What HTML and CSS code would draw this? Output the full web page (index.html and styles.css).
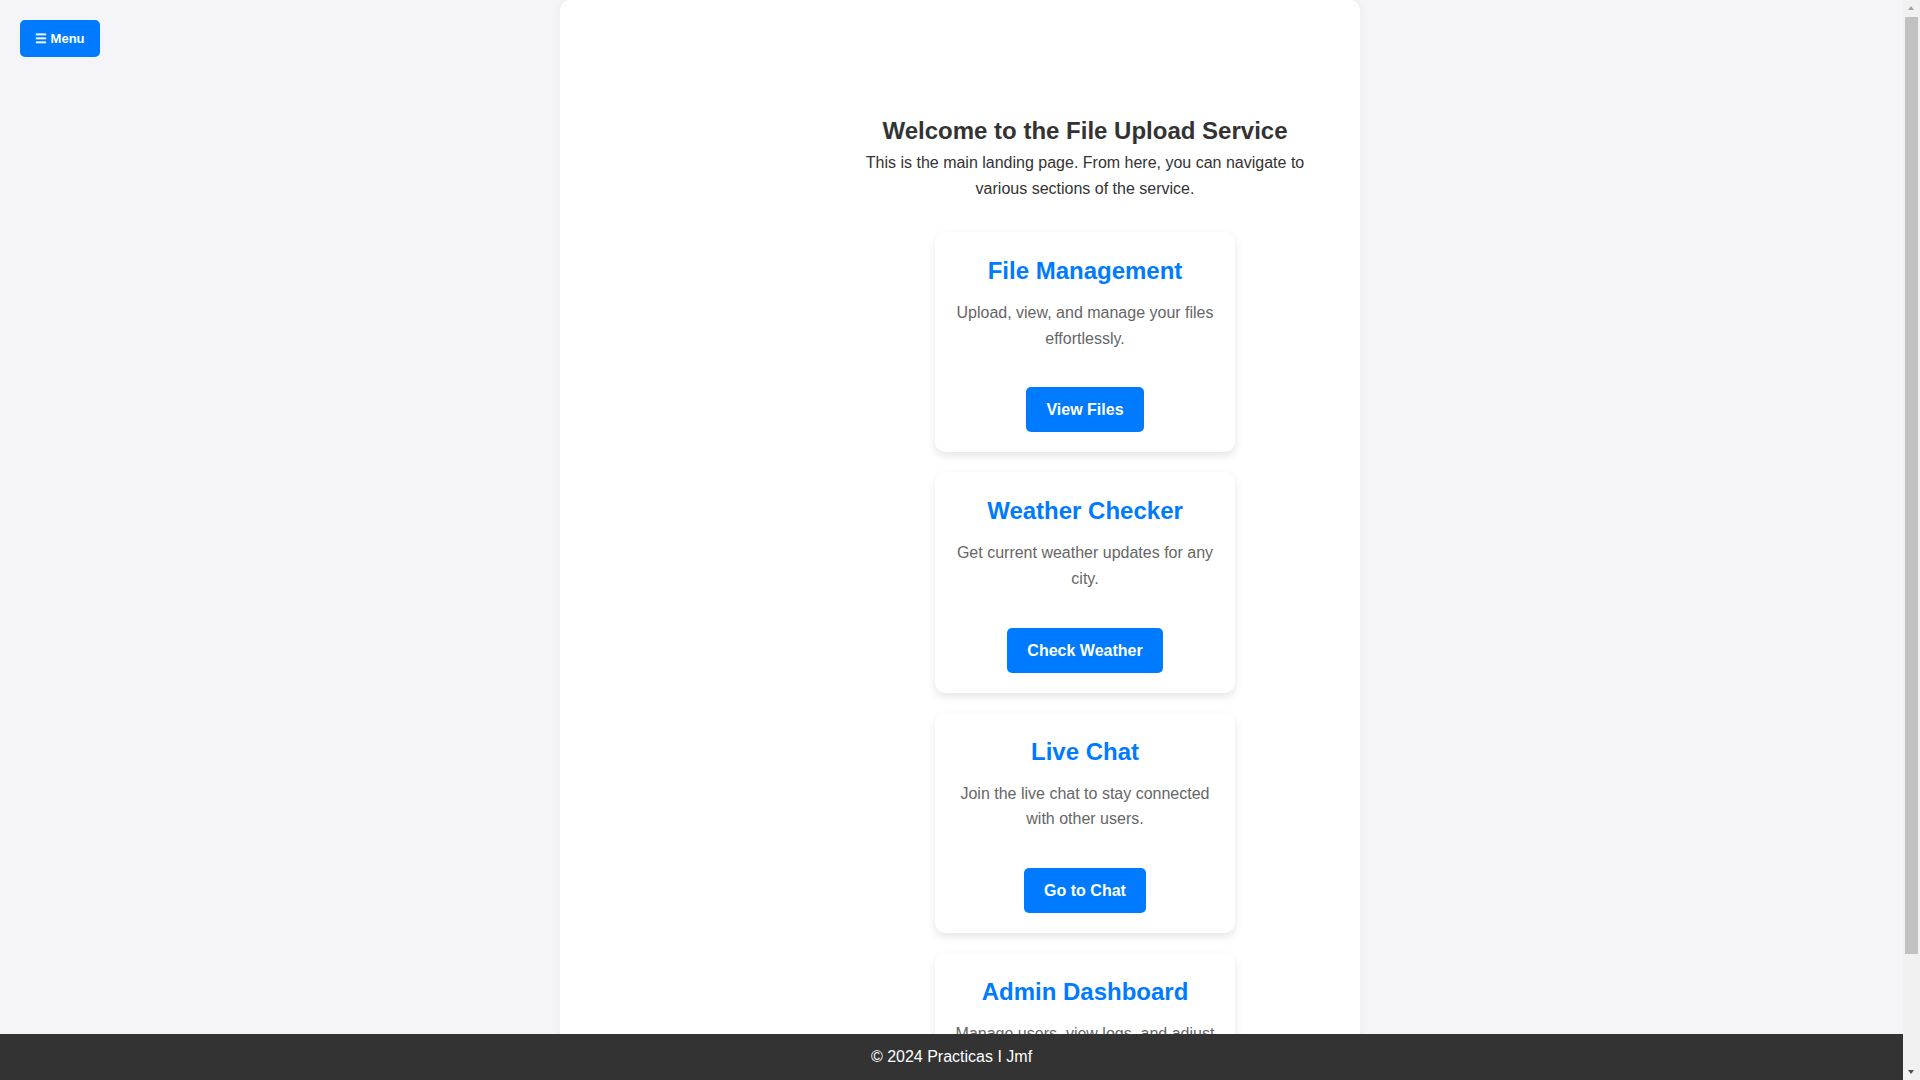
FILE: index.html
```html
<!DOCTYPE html>
<html lang="en">
<head>
<meta charset="UTF-8">
<title>File Upload Service</title>
<link rel="stylesheet" href="styles.css">
</head>
<body>
<button class="menu-btn">☰ Menu</button>
<div class="container">
  <main class="content">
    <h2 class="title">Welcome to the File Upload Service</h2>
    <p class="intro">This is the main landing page. From here, you can navigate to various sections of the service.</p>
    <div class="cards">
      <section class="card">
        <h3 class="card-title">File Management</h3>
        <p class="card-text">Upload, view, and manage your files effortlessly.</p>
        <a class="card-btn" href="#">View Files</a>
      </section>
      <section class="card">
        <h3 class="card-title">Weather Checker</h3>
        <p class="card-text">Get current weather updates for any city.</p>
        <a class="card-btn" href="#">Check Weather</a>
      </section>
      <section class="card">
        <h3 class="card-title">Live Chat</h3>
        <p class="card-text">Join the live chat to stay connected with other users.</p>
        <a class="card-btn" href="#">Go to Chat</a>
      </section>
      <section class="card">
        <h3 class="card-title">Admin Dashboard</h3>
        <p class="card-text">Manage users, view logs, and adjust settings.</p>
        <a class="card-btn" href="#">Go to Dashboard</a>
      </section>
    </div>
  </main>
</div>
<footer class="footer">© 2024 Practicas I Jmf</footer>
<div class="scrollbar" aria-hidden="true">
  <span class="sb-arrow sb-up"></span>
  <span class="sb-thumb"></span>
  <span class="sb-arrow sb-down"></span>
</div>
</body>
</html>
```
FILE: styles.css
```css
html, body {
  margin: 0;
  padding: 0;
}
body {
  background: #f4f4f9;
  font-family: "Liberation Sans", Arial, sans-serif;
  color: #333;
  padding-bottom: 12px;
}
.menu-btn {
  position: fixed;
  top: 20px;
  left: 20px;
  background: #007bff;
  color: #fff;
  border: none;
  border-radius: 5px;
  font-family: "Liberation Sans", Arial, sans-serif;
  font-size: 13px;
  font-weight: bold;
  padding: 10px 15px;
  line-height: 17px;
  cursor: pointer;
  z-index: 10;
}
.container {
  width: 800px;
  margin: 0 auto;
  box-sizing: border-box;
  background: #fff;
  border-radius: 10px;
  box-shadow: 0 0 10px rgba(0, 0, 0, 0.05);
  padding: 117px 20px 20px 20px;
}
.content {
  margin-left: 250px;
  display: flex;
  flex-direction: column;
  align-items: center;
  text-align: center;
}
.title {
  margin: 0;
  font-size: 24px;
  line-height: 28px;
  font-weight: bold;
  color: #333;
}
.intro {
  margin: 5px 0 0 0;
  font-size: 16px;
  line-height: 25.6px;
  color: #333;
  width: 450px;
}
.cards {
  margin-top: 31px;
  display: flex;
  flex-direction: column;
  align-items: center;
  gap: 20px;
}
.card {
  width: 300px;
  box-sizing: border-box;
  background: #fff;
  border-radius: 10px;
  box-shadow: 0 4px 8px rgba(0, 0, 0, 0.1);
  padding: 20px;
  display: flex;
  flex-direction: column;
  align-items: center;
}
.card-title {
  margin: 5px 0 0 0;
  font-size: 24px;
  line-height: 27.6px;
  color: #007bff;
}
.card-text {
  margin: 15.4px 0 0 0;
  font-size: 16px;
  line-height: 25.6px;
  color: #666;
}
.card-btn {
  margin-top: 36px;
  display: inline-block;
  background: #007bff;
  color: #fff;
  text-decoration: none;
  font-weight: bold;
  font-size: 16px;
  line-height: 19px;
  padding: 13px 20px;
  border-radius: 5px;
}
.footer {
  position: fixed;
  left: 0;
  right: 0;
  bottom: 0;
  height: 46px;
  padding-right: 17px;
  background: #333;
  color: #fff;
  font-size: 16px;
  display: flex;
  align-items: center;
  justify-content: center;
}
.scrollbar {
  position: fixed;
  top: 0;
  right: 0;
  bottom: 0;
  width: 17px;
  background: #f1f1f1;
  display: flex;
  flex-direction: column;
  align-items: center;
  z-index: 20;
}
.sb-arrow {
  height: 17px;
  width: 17px;
  position: relative;
  flex: none;
}
.sb-up::after,
.sb-down::after {
  content: "";
  position: absolute;
  left: 5px;
  border-left: 3.5px solid transparent;
  border-right: 3.5px solid transparent;
}
.sb-up::after {
  top: 6px;
  border-bottom: 4px solid #a3a3a3;
}
.sb-down::after {
  bottom: 6px;
  border-top: 4px solid #505050;
}
.sb-thumb {
  width: 13px;
  height: 937px;
  background: #c1c1c1;
  flex: none;
}
.sb-down {
  margin-top: auto;
}
```
